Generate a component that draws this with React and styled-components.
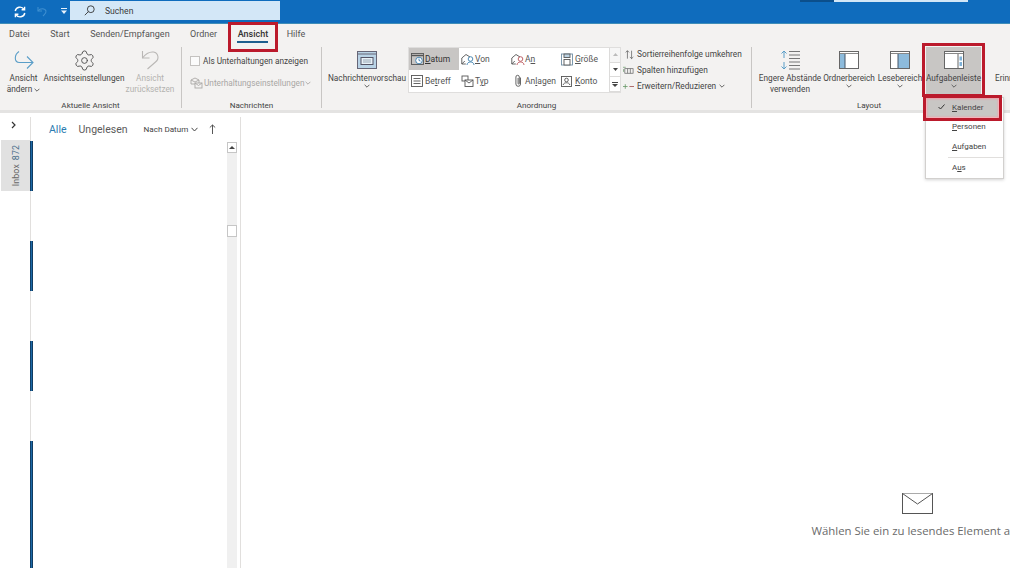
import React from "react";
import styled, { createGlobalStyle } from "styled-components";
import { Settings } from "lucide-react";

const Global = createGlobalStyle`
  html, body { margin: 0; padding: 0; background: #fff; }
  body { font-family: Roboto, "Open Sans", sans-serif; color: #444; }
`;

const Page = styled.div`
  width: 1010px; height: 568px; overflow: hidden; display: flex; flex-direction: column; background: #fff;
`;
const TitleBar = styled.div`
  height: 23px; flex: none; background: #0f6cbd; border-bottom: 1px solid #3f8db8;
  display: flex; align-items: flex-start; position: relative;
`;
const QuickIcons = styled.div`
  width: 70px; height: 23px; flex: none; display: flex; align-items: center; padding-left: 14px; gap: 10px; box-sizing: border-box;
`;
const SearchBox = styled.div`
  width: 210px; height: 19px; margin-top: 1px; background: #d3e7f7; display: flex; align-items: center; padding-left: 14px; gap: 10px;
  box-sizing: border-box; font-size: 8.6px; color: #3a3a3a;
`;
const TopStrip = styled.div`
  margin-left: auto; margin-right: 42px; display: flex; height: 1.5px;
`;
const TopStripPart = styled.div`
  width: ${p => p.$w}px; background: ${p => p.$c};
`;
const TabRow = styled.div`
  height: 21px; flex: none; background: #f3f2f1; display: flex; align-items: center; font-size: 9px; color: #555; padding-left: 0;
`;
const Tab = styled.div`
  padding: 0 10.25px; position: relative; height: 21px; line-height: 21px; white-space: nowrap;
  margin-left: ${p => p.$ml ?? 0}px;
  margin-right: ${p => p.$mr ?? 0}px;
  color: ${p => (p.$active ? "#333" : "#555")};
  font-weight: ${p => (p.$active ? 500 : 400)};
`;
const TabUnderline = styled.div`
  position: absolute; left: 10px; right: 10px; bottom: 2px; height: 2px; background: #1f5f8e;
`;
const RedBox = styled.div`
  position: absolute; box-sizing: border-box; border: 3.5px solid #bb1a2c; pointer-events: none; z-index: 5;
  top: ${p => p.$t}px; left: ${p => p.$l}px; width: ${p => p.$w}px; height: ${p => p.$h}px;
  ${p => p.$glow ? "box-shadow: inset 0 0 2px 1px #f19aa4;" : ""}
`;
const Ribbon = styled.div`
  height: 65px; flex: none; background: #f3f2f1; display: flex; padding-top: 2px; box-sizing: border-box;
  font-size: 8.25px;
`;
const RibbonEdge = styled.div`
  height: 3px; flex: none; background: #e4e3e2;
`;
const Group = styled.div`
  width: ${p => p.$w}px; flex: none; display: flex; flex-direction: column; box-sizing: border-box; height: 61px;
  border-right: ${p => (p.$sep ? "1px solid #c8c6c4" : "0")};
`;
const GroupBody = styled.div`
  flex: 1; display: flex; align-items: flex-start; padding-left: ${p => p.$pl ?? 0}px; min-height: 0;
`;
const GroupLabel = styled.div`
  height: 11px; line-height: 11px; text-align: center; font-size: 8.1px; color: #444; margin-bottom: -3px;
`;
const BigButton = styled.div`
  width: ${p => (p.$w ? `${p.$w}px` : "auto")}; flex: none; height: 50px; display: flex; flex-direction: column; align-items: center; position: relative;
  margin-left: ${p => p.$ml ?? 0}px;
  background: ${p => (p.$on ? "#c8c6c4" : "transparent")};
`;
const BigIcon = styled.div`
  height: 26px; flex: none; display: flex; align-items: center; justify-content: center;
`;
const BigLabel = styled.div`
  line-height: 11px; white-space: nowrap; color: ${p => (p.$off ? "#b4b2b0" : "#444")}; display: flex; align-items: center; gap: 2px;
`;
const Chev = styled.svg`
  flex: none;
`;
const OptionColumn = styled.div`
  display: flex; flex-direction: column; gap: 2px; padding-top: 4px;
`;
const OptionRow = styled.div`
  height: 20px; display: flex; align-items: center; gap: ${p => p.$gap}px; white-space: nowrap; color: ${p => (p.$off ? "#a9a7a5" : "#444")};
`;
const CheckBox = styled.div`
  width: 8px; height: 8px; border: 1px solid #c4c2c0; background: #fbfbfb;
`;
const Gallery = styled.div`
  width: 211px; height: 44px; margin: 1px 0 0 3px; flex: none; background: #fff; box-sizing: border-box; box-shadow: 0 0 0 1px #dfdedd;
  display: flex;
`;
const GalleryGrid = styled.div`
  flex: 1; display: grid; grid-template-columns: repeat(4, 50px); grid-template-rows: repeat(2, 22px);
`;
const GalleryItem = styled.div`
  display: flex; align-items: center; padding-left: 2px; white-space: nowrap; color: #555; font-size: 8.5px;
  background: ${p => (p.$on ? "#c8c6c4" : "transparent")};
  ${p => (p.$on ? "color:#333;" : "")}
`;
const GalleryIconSlot = styled.div`
  width: 14px; flex: none; display: flex; align-items: center; justify-content: flex-start;
`;
const GalleryScroll = styled.div`
  width: 11px; flex: none; display: flex; flex-direction: column;
`;
const GalleryStep = styled.div`
  flex: 1; display: flex; align-items: center; justify-content: center; background: ${p => p.$bg}; border: 1px solid #dcdbda; border-width: 0 0 1px 1px;
`;
const Stack = styled.div`
  display: flex; flex-direction: column; margin: -1px 0 0 3px; flex: none;
`;
const StackRow = styled.div`
  height: 16px; display: flex; align-items: center; white-space: nowrap; gap: 3px; color: #444; font-size: 8.3px;
`;
const StackIcon = styled.div`
  width: 11px; flex: none; display: flex; align-items: center; justify-content: center;
`;
const Menu = styled.div`
  position: absolute; top: 50px; left: -1px; width: 79px; height: 82px; background: #fff; border: 1px solid #d2d0ce; box-sizing: border-box;
  box-shadow: 0 1px 3px rgba(0,0,0,.18); z-index: 4; font-size: 8px; color: #444;
`;
const MenuItem = styled.div`
  height: 19.3px; display: flex; align-items: center; padding-left: 26px; position: relative;
  background: ${p => (p.$on ? "#c8c6c4" : "transparent")};
  margin: ${p => (p.$on ? "0 5px 0 1px" : "0")};
  ${p => (p.$on ? "padding-left: 25px;" : "")}
`;
const MenuCheck = styled.svg`
  position: absolute; left: 11px; top: 6px;
`;
const MenuDivider = styled.div`
  height: 1px; background: #e1dfdd; margin: 1px 0 0 22px;
`;
const Body = styled.div`
  flex: 1; min-height: 0; display: flex; padding-top: 4px; background: #fff;
`;
const Rail = styled.div`
  width: 31px; flex: none; box-sizing: border-box; border-right: 1px solid #e1dfdd; display: flex; flex-direction: column;
`;
const RailToggle = styled.div`
  height: 23px; flex: none; display: flex; align-items: center; justify-content: center; padding: 0 3px 7px 0; box-sizing: border-box;
`;
const InboxTab = styled.div`
  height: 51px; margin-left: 1px; background: #e1e1e1; display: flex; align-items: center; justify-content: center; flex: none;
`;
const InboxText = styled.div`
  writing-mode: vertical-rl; transform: rotate(180deg); font-size: 8.8px; letter-spacing: .1px; color: #666; white-space: nowrap; display: flex; gap: 4px;
`;
const InboxCount = styled.span`
  color: #4b6f8a;
`;
const ListPane = styled.div`
  width: 210px; flex: none; box-sizing: border-box; border-right: 1px solid #e1dfdd; display: flex; flex-direction: column;
`;
const ListHeader = styled.div`
  height: 24px; flex: none; display: flex; align-items: center; padding-left: 18px; white-space: nowrap;
`;
const Filter = styled.div`
  font-size: 10.5px; margin-right: ${p => p.$mr}px; color: ${p => (p.$on ? "#2b7cb0" : "#5b5b5b")};
`;
const SortLabel = styled.div`
  font-size: 8.1px; color: #444; display: flex; align-items: center; gap: 3px;
`;
const SortArrow = styled.svg`
  margin-left: 11px;
`;
const ListBody = styled.div`
  flex: 1; min-height: 0; display: flex; padding-right: 3px;
`;
const Rows = styled.div`
  flex: 1; display: flex; flex-direction: column;
`;
const Row = styled.div`
  height: 50px; flex: none; display: flex;
`;
const UnreadBar = styled.div`
  width: 3px; height: 49.5px; margin-left: -1px; background: linear-gradient(90deg, #08243f 0, #1f6fb0 45%, #08243f 100%);
`;
const Scrollbar = styled.div`
  width: 10px; flex: none; background: #f0f0f0; display: flex; flex-direction: column; margin-top: 1px;
`;
const ScrollUp = styled.div`
  height: 11px; box-sizing: border-box; background: #fff; border: 1px solid #c6c6c6; display: flex; align-items: center; justify-content: center;
`;
const ScrollThumb = styled.div`
  height: 12px; box-sizing: border-box; margin-top: 72px; background: #fff; border: 1px solid #c6c6c6;
`;
const ReadingPane = styled.div`
  width: 1352px; flex: none; display: flex; flex-direction: column; align-items: center; padding-top: 376px; box-sizing: border-box;
`;
const EmptyText = styled.div`
  margin-top: 9px; font-family: "Open Sans", sans-serif; font-size: 11.4px; color: #6a6a6a; white-space: nowrap;
`;

const Chevron = ({ c = "#555" }) => (
  <Chev width="6" height="4" viewBox="0 0 6 4"><path d="M.6.8 3 3.2 5.400.8" fill="none" stroke={c} strokeWidth=".9" /></Chev>
);

const SyncIcon = () => (
  <svg width="12" height="12" viewBox="0 0 12 12" fill="none" stroke="#fff" strokeWidth="1.4">
    <path d="M1.200 5A4.800 4.800 0 0 1 10 3.400" /><path d="M10.600.8v3h-3" />
    <path d="M10.800 7A4.800 4.800 0 0 1 2 8.600" /><path d="M1.400 11.200v-3h3" />
  </svg>
);
const UndoFaint = () => (
  <svg width="12" height="12" viewBox="0 0 12 12" fill="none" stroke="#3f8fd0" strokeWidth="1.1">
    <path d="M2 1v4h4" /><path d="M2 5c2-3 7-3 8 0 .5 2-1 3-3 5" />
  </svg>
);
const QuickMore = () => (
  <svg width="6" height="7" viewBox="0 0 6 7" style={{ marginLeft: 3 }}>
    <path d="M0 .5h6" stroke="#e8f2fb" /><path d="M0 2.500h6L3 6z" fill="#e8f2fb" />
  </svg>
);
const SearchIcon = () => (
  <svg width="11" height="11" viewBox="0 0 11 11" fill="none" stroke="#333" strokeWidth=".9">
    <circle cx="6.800" cy="4.200" r="3.400" /><path d="M4.400 6.600.8 10.200" />
  </svg>
);
const ViewChange = () => (
  <svg width="20" height="19" viewBox="0 0 20 19" fill="none" stroke="#5a9ec8" strokeWidth="1.1">
    <path d="M5 .5C.5 3.500-.5 11 5.500 11.500H19" /><path d="M13 5.500l6 6-6 6" />
  </svg>
);
const ResetIcon = () => (
  <svg width="19" height="20" viewBox="0 0 19 20" fill="none" stroke="#b9b7b5" strokeWidth="1.1">
    <path d="M1.500 1v7h7" /><path d="M1.500 8c3-4 7-6.500 11-6 5 1 6 7 2 10l-8 7" />
  </svg>
);
const ConversationIcon = () => (
  <svg width="13" height="12" viewBox="0 0 13 12" fill="none" stroke="#aaa8a6" strokeWidth=".9">
    <path d="M1 3l4-2 4 2v4H1z" /><path d="M1 3l4 2 4-2" /><rect x="5" y="6" width="7" height="5" fill="#f3f2f1" /><path d="M5 6l3.500 2.500L12 6" />
  </svg>
);
const PreviewIcon = () => (
  <svg width="20" height="18" viewBox="0 0 20 18">
    <rect x=".5" y=".5" width="19" height="17" fill="#b9d3e6" stroke="#667" />
    <path d="M1 3h18" stroke="#667" />
    <rect x="4" y="6.500" width="12" height="7" fill="#e8f1f7" stroke="#556" />
    <path d="M6 9h8M6 11h8" stroke="#789" strokeWidth=".7" />
  </svg>
);
const stroke = { fill: "none", stroke: "#555", strokeWidth: 0.9 };
const DateIcon = () => (
  <svg width="14" height="14" viewBox="0 0 14 14" {...stroke}>
    <rect x=".5" y="1.500" width="12" height="11" /><path d="M.5 3.500h12" strokeWidth="1.400" />
    <circle cx="8" cy="8.500" r="3.300" stroke="#3c7fae" fill="#fff" /><path d="M8 6.500v2l1.500.5" stroke="#3c7fae" />
  </svg>
);
const PersonMail = ({ c }) => (
  <svg width="14" height="13" viewBox="0 0 14 13" {...stroke}>
    <path d="M.8 5L5 1.500 9 4M.8 5v6h4" /><path d="M.8 11l3-3" />
    <circle cx="9.500" cy="6" r="2.300" stroke={c} /><path d="M6 12c0-4 7-4 7 0" stroke={c} />
  </svg>
);
const SubjectIcon = () => (
  <svg width="12" height="12" viewBox="0 0 12 12" {...stroke}>
    <rect x=".5" y=".5" width="11" height="11" /><path d="M2.500 3.500h7M2.500 6h7M2.500 8.500h7" />
  </svg>
);
const TypeIcon = () => (
  <svg width="13" height="13" viewBox="0 0 13 13" {...stroke}>
    <rect x="1" y="1" width="6" height="5" fill="#fff" /><rect x="4" y="5" width="8" height="6.500" fill="#fff" /><path d="M4 5l4 3 4-3" />
  </svg>
);
const ClipIcon = () => (
  <svg width="9" height="14" viewBox="0 0 9 14" {...stroke} style={{ marginLeft: 3 }}>
    <path d="M6.500 3.500v6.500a2.300 2.300 0 0 1-4.600 0V3a1.700 1.700 0 0 1 3.400 0v6.500a.6.6 0 0 1-1.200 0V4" />
  </svg>
);
const SizeIcon = () => (
  <svg width="12" height="13" viewBox="0 0 12 13" {...stroke}>
    <rect x=".5" y="1" width="11" height="11" stroke="#6f8ea5" /><rect x="3" y="1" width="6" height="3.500" fill="#bcd3e3" /><rect x="3" y="6.500" width="6" height="5.500" fill="#fff" />
  </svg>
);
const AccountIcon = () => (
  <svg width="11" height="11" viewBox="0 0 11 11" {...stroke}>
    <rect x=".5" y=".5" width="10" height="10" /><circle cx="5.500" cy="4" r="1.800" /><path d="M2.200 9c0-3 6.600-3 6.600 0" />
  </svg>
);
const SortFlip = () => (
  <svg width="13" height="13" viewBox="0 0 13 13" fill="none" stroke="#444" strokeWidth=".9" style={{ marginLeft: 2 }}>
    <path d="M3.500 12.500V1M1 3.500 3.500 1 6 3.500" /><path d="M9.500 1v11.500M7 10l2.500 2.500L12 10" />
  </svg>
);
const ColumnsIcon = () => (
  <svg width="12" height="9" viewBox="0 0 12 9" fill="none" stroke="#666" strokeWidth=".8">
    <rect x="2" y="2.500" width="9" height="5" /><path d="M5 2.500v5M8 2.500v5" /><path d="M.5 3v3M3 1H0" stroke="#6a9a6a" />
  </svg>
);
const ExpandIcon = () => (
  <svg width="12" height="5" viewBox="0 0 12 5" fill="none" strokeWidth=".9">
    <path d="M0 2.500h5M2.500 0v5" stroke="#6a9a6a" /><path d="M7 2.500h5" stroke="#a05050" />
  </svg>
);
const SpacingIcon = () => (
  <svg width="21" height="20" viewBox="0 0 21 20" fill="none" strokeWidth="1">
    <path d="M4 1v7M1.500 3.500 4 1l2.500 2.500M4 12v7M1.500 16.500 4 19l2.500-2.500" stroke="#5a9ec8" />
    <path d="M9 1.500h11M9 5h11M9 8.500h11M9 12h11M9 15.500h11M9 19h11" stroke="#777" />
  </svg>
);
const PaneIcon = ({ variant }) => (
  <svg width="20" height="18" viewBox="0 0 20 18">
    <rect x=".5" y=".5" width="19" height="17" fill="#fff" stroke="#666" />
    <path d="M1 2.500h18" stroke="#888" />
    {variant === "left" && <><rect x="1" y="3" width="5" height="14" fill="#8dbbdc" /><path d="M6 3v14" stroke="#456" /></>}
    {variant === "right" && <><rect x="8" y="3" width="11" height="14" fill="#8dbbdc" /><path d="M8 3v14" stroke="#456" /></>}
    {variant === "task" && <><path d="M14 3v14" stroke="#666" /><rect x="15.500" y="5.500" width="2.500" height="4" fill="#7fb2d8" /><rect x="15.500" y="11" width="2.500" height="4" fill="#7fb2d8" /></>}
  </svg>
);

const galleryItems = [
  { icon: <DateIcon />, label: <><u>D</u>atum</>, on: true },
  { icon: <PersonMail c="#3c7fae" />, label: <><u>V</u>on</> },
  { icon: <PersonMail c="#b8545a" />, label: <>A<u>n</u></> },
  { icon: <SizeIcon />, label: <><u>G</u>röße</> },
  { icon: <SubjectIcon />, label: <>Be<u>t</u>reff</> },
  { icon: <TypeIcon />, label: <>T<u>y</u>p</> },
  { icon: <ClipIcon />, label: <>An<u>l</u>agen</> },
  { icon: <AccountIcon />, label: <><u>K</u>onto</> },
];
const rows = [true, false, true, false, true, false, true, true, true];

export default function App() {
  return (
    <Page>
      <Global />
      <TitleBar>
        <QuickIcons><SyncIcon /><UndoFaint /><QuickMore /></QuickIcons>
        <SearchBox><SearchIcon />Suchen</SearchBox>
        <TopStrip><TopStripPart $w={34} $c="#0b4f8c" /><TopStripPart $w={134} $c="#d3e7f7" /></TopStrip>
      </TitleBar>
      <TabRow>
        <Tab $ml={-1.25}>Datei</Tab>
        <Tab>Start</Tab>
        <Tab>Senden/Empfangen</Tab>
        <Tab>Ordner</Tab>
        <Tab $active $mr={-2}>Ansicht<TabUnderline /><RedBox $t={-2} $l={1} $w={50} $h={30} /></Tab>
        <Tab>Hilfe</Tab>
      </TabRow>
      <Ribbon>
        <Group $w={182} $sep>
          <GroupBody>
            <BigButton $w={41} $ml={3}>
              <BigIcon><ViewChange /></BigIcon>
              <BigLabel>Ansicht</BigLabel>
              <BigLabel>ändern <Chevron /></BigLabel>
            </BigButton>
            <BigButton $w={80}>
              <BigIcon><Settings size={23} strokeWidth={1} color="#555" /></BigIcon>
              <BigLabel>Ansichtseinstellungen</BigLabel>
            </BigButton>
            <BigButton $w={52}>
              <BigIcon><ResetIcon /></BigIcon>
              <BigLabel $off>Ansicht</BigLabel>
              <BigLabel $off>zurücksetzen</BigLabel>
            </BigButton>
          </GroupBody>
          <GroupLabel>Aktuelle Ansicht</GroupLabel>
        </Group>
        <Group $w={140} $sep>
          <GroupBody $pl={8}>
            <OptionColumn>
              <OptionRow $gap={3}><CheckBox />Als Unterhaltungen anzeigen</OptionRow>
              <OptionRow $gap={1} $off><ConversationIcon />Unterhaltungseinstellungen <Chevron c="#a9a7a5" /></OptionRow>
            </OptionColumn>
          </GroupBody>
          <GroupLabel>Nachrichten</GroupLabel>
        </Group>
        <Group $w={430} $sep>
          <GroupBody $pl={6}>
            <BigButton $w={78}>
              <BigIcon><PreviewIcon /></BigIcon>
              <BigLabel>Nachrichtenvorschau</BigLabel>
              <BigLabel><Chevron /></BigLabel>
            </BigButton>
            <Gallery>
              <GalleryGrid>
                {galleryItems.map((g, i) => (
                  <GalleryItem key={i} $on={g.on}><GalleryIconSlot>{g.icon}</GalleryIconSlot><span>{g.label}</span></GalleryItem>
                ))}
              </GalleryGrid>
              <GalleryScroll>
                <GalleryStep $bg="#f6f6f6"><svg width="5" height="3" viewBox="0 0 5 3"><path d="M0 3 2.500 0 5 3z" fill="#bbb" /></svg></GalleryStep>
                <GalleryStep $bg="#fff"><svg width="5" height="3" viewBox="0 0 5 3"><path d="M0 0 2.500 3 5 0z" fill="#444" /></svg></GalleryStep>
                <GalleryStep $bg="#fff"><svg width="6" height="5" viewBox="0 0 6 5"><path d="M0 .5h6" stroke="#444" /><path d="M0 2h6L3 5z" fill="#444" /></svg></GalleryStep>
              </GalleryScroll>
            </Gallery>
            <Stack>
              <StackRow><StackIcon><SortFlip /></StackIcon>Sortierreihenfolge umkehren</StackRow>
              <StackRow><StackIcon><ColumnsIcon /></StackIcon>Spalten hinzufügen</StackRow>
              <StackRow><StackIcon><ExpandIcon /></StackIcon>Erweitern/Reduzieren <Chevron /></StackRow>
            </Stack>
          </GroupBody>
          <GroupLabel>Anordnung</GroupLabel>
        </Group>
        <Group $w={234}>
          <GroupBody $pl={6}>
            <BigButton $w={64}>
              <BigIcon><SpacingIcon /></BigIcon>
              <BigLabel>Engere Abstände</BigLabel>
              <BigLabel>verwenden</BigLabel>
            </BigButton>
            <BigButton $w={54}>
              <BigIcon><PaneIcon variant="left" /></BigIcon>
              <BigLabel>Ordnerbereich</BigLabel>
              <BigLabel><Chevron /></BigLabel>
            </BigButton>
            <BigButton $w={48}>
              <BigIcon><PaneIcon variant="right" /></BigIcon>
              <BigLabel>Lesebereich</BigLabel>
              <BigLabel><Chevron /></BigLabel>
            </BigButton>
            <BigButton $w={55} $ml={2} $on>
              <BigIcon><PaneIcon variant="task" /></BigIcon>
              <BigLabel>Aufgabenleiste</BigLabel>
              <BigLabel><Chevron /></BigLabel>
              <RedBox $t={-4} $l={-4} $w={63} $h={54} />
              <Menu>
                <MenuItem $on>
                  <MenuCheck width="7" height="6" viewBox="0 0 7 6"><path d="M.5 3 2.500 5 6.500.5" fill="none" stroke="#333" /></MenuCheck>
                  <span><u>K</u>alender</span>
                </MenuItem>
                <MenuItem><span><u>P</u>ersonen</span></MenuItem>
                <MenuItem><span><u>A</u>ufgaben</span></MenuItem>
                <MenuDivider />
                <MenuItem><span>A<u>u</u>s</span></MenuItem>
                <RedBox $t={-3} $l={-3} $w={79} $h={26} $glow />
              </Menu>
            </BigButton>
          </GroupBody>
          <GroupLabel>Layout</GroupLabel>
        </Group>
        <Group $w={200}>
          <GroupBody $pl={9}>
            <BigButton>
              <BigIcon />
              <BigLabel>Erinnerungsfenster</BigLabel>
            </BigButton>
          </GroupBody>
        </Group>
      </Ribbon>
      <RibbonEdge />
      <Body>
        <Rail>
          <RailToggle>
            <svg width="5" height="8" viewBox="0 0 5 8"><path d="M1 1l3 3-3 3" fill="none" stroke="#333" strokeWidth="1.200" /></svg>
          </RailToggle>
          <InboxTab>
            <InboxText><span>Inbox</span><InboxCount>872</InboxCount></InboxText>
          </InboxTab>
        </Rail>
        <ListPane>
          <ListHeader>
            <Filter $on $mr={12}>Alle</Filter>
            <Filter $mr={16}>Ungelesen</Filter>
            <SortLabel>Nach Datum
              <svg width="7" height="5" viewBox="0 0 7 5"><path d="M.5.8 3.500 4 6.500.8" fill="none" stroke="#444" /></svg>
            </SortLabel>
            <SortArrow width="7" height="10" viewBox="0 0 7 10"><path d="M3.500 10V1M.8 3.500 3.500 1l2.700 2.500" fill="none" stroke="#444" strokeWidth=".9" /></SortArrow>
          </ListHeader>
          <ListBody>
            <Rows>
              {rows.map((unread, i) => <Row key={i}>{unread && <UnreadBar />}</Row>)}
            </Rows>
            <Scrollbar>
              <ScrollUp><svg width="6" height="3" viewBox="0 0 6 3"><path d="M0 3 3 0l3 3z" fill="#444" /></svg></ScrollUp>
              <ScrollThumb />
            </Scrollbar>
          </ListBody>
        </ListPane>
        <ReadingPane>
          <svg width="31" height="21" viewBox="0 0 31 21" fill="#fff" stroke="#555" strokeWidth="1">
            <rect x=".5" y=".5" width="30" height="20" /><path d="M.5.5 15.500 11 30.500.5" />
          </svg>
          <EmptyText>Wählen Sie ein zu lesendes Element aus</EmptyText>
        </ReadingPane>
      </Body>
    </Page>
  );
}
